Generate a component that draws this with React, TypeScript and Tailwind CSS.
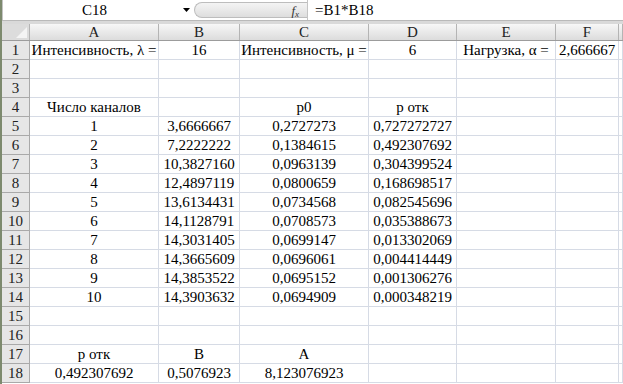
const columns = ["A", "B", "C", "D", "E", "F", ""];

const rows: string[][] = [
  ["Интенсивность, λ =", "16", "Интенсивность, μ =", "6", "Нагрузка, α =", "2,666667"],
  [],
  [],
  ["Число каналов", "", "p0", "p отк"],
  ["1", "3,6666667", "0,2727273", "0,727272727"],
  ["2", "7,2222222", "0,1384615", "0,492307692"],
  ["3", "10,3827160", "0,0963139", "0,304399524"],
  ["4", "12,4897119", "0,0800659", "0,168698517"],
  ["5", "13,6134431", "0,0734568", "0,082545696"],
  ["6", "14,1128791", "0,0708573", "0,035388673"],
  ["7", "14,3031405", "0,0699147", "0,013302069"],
  ["8", "14,3665609", "0,0696061", "0,004414449"],
  ["9", "14,3853522", "0,0695152", "0,001306276"],
  ["10", "14,3903632", "0,0694909", "0,000348219"],
  [],
  [],
  ["р отк", "B", "A"],
  ["0,492307692", "0,5076923", "8,123076923"],
];

const gridCols = "grid-cols-[28px_129px_81px_129px_88px_99px_63px_1fr]";

const FormulaBar = () => (
  <div className="flex h-[21px] items-stretch border-b border-[#b9b9b9] bg-white">
    <div className="flex w-[192px] items-center border-l border-[#c4c4c4] pl-[3px]">
      <span className="flex-1 text-center text-[15px] leading-none">C18</span>
      <svg className="mr-[4px]" width="7" height="4" viewBox="0 0 7 4">
        <polygon points="0,0 7,0 3.5,4" fill="#000" />
      </svg>
    </div>
    <div className="my-[2px] flex w-[113px] items-center justify-end rounded-l-full border border-r-0 border-[#bdbdbd] bg-gradient-to-b from-[#f4f4f4] to-[#dedede] pr-[8px]">
      <span className="text-[13px] italic leading-none text-[#333]">f<sub className="text-[9px]">x</sub></span>
    </div>
    <div className="flex flex-1 items-center border-l border-[#c4c4c4] pl-[7px] text-[15px] leading-none">
      =B1*B18
    </div>
  </div>
);

export default function App() {
  return (
    <div className="h-[384px] w-[623px] overflow-hidden border-l-2 border-[#7d8a6e] bg-white text-black [font-family:'Liberation_Serif','Times_New_Roman',serif]">
      <FormulaBar />
      <div className="h-[3px] bg-[#d9d9d9]" />

      {/* HEADER */}
      <div className={`grid ${gridCols} h-[17px] border-b border-[#9c9c9c]`}>
        <div className="relative border-r border-[#b4b4b4] bg-[#dcdcdc]">
          <svg className="absolute bottom-[2px] right-[2px]" width="11" height="11" viewBox="0 0 11 11">
            <polygon points="11,0 11,11 0,11" fill="#f4f4f4" />
          </svg>
        </div>
        {columns.map((c, i) => (
          <div
            key={i}
            className="flex items-center justify-center border-r border-[#b4b4b4] bg-gradient-to-b from-[#f7f7f7] to-[#dcdcdc] text-[15px] leading-none text-[#222]"
          >
            {c}
          </div>
        ))}
      </div>

      {/* ROWS */}
      {rows.map((row, r) => (
        <div key={r} className={`grid ${gridCols} h-[19px]`}>
          <div className="flex items-center justify-center border-r border-b border-[#a9a9a9] bg-[#e6e6e6] text-[15px] leading-none text-[#222]">
            {r + 1}
          </div>
          {columns.map((_, c) => (
            <div
              key={c}
              className="flex items-center justify-center whitespace-nowrap border-r border-b border-[#d6dbe5] text-[15px] leading-none"
            >
              {row[c] ?? ""}
            </div>
          ))}
        </div>
      ))}
    </div>
  );
}
